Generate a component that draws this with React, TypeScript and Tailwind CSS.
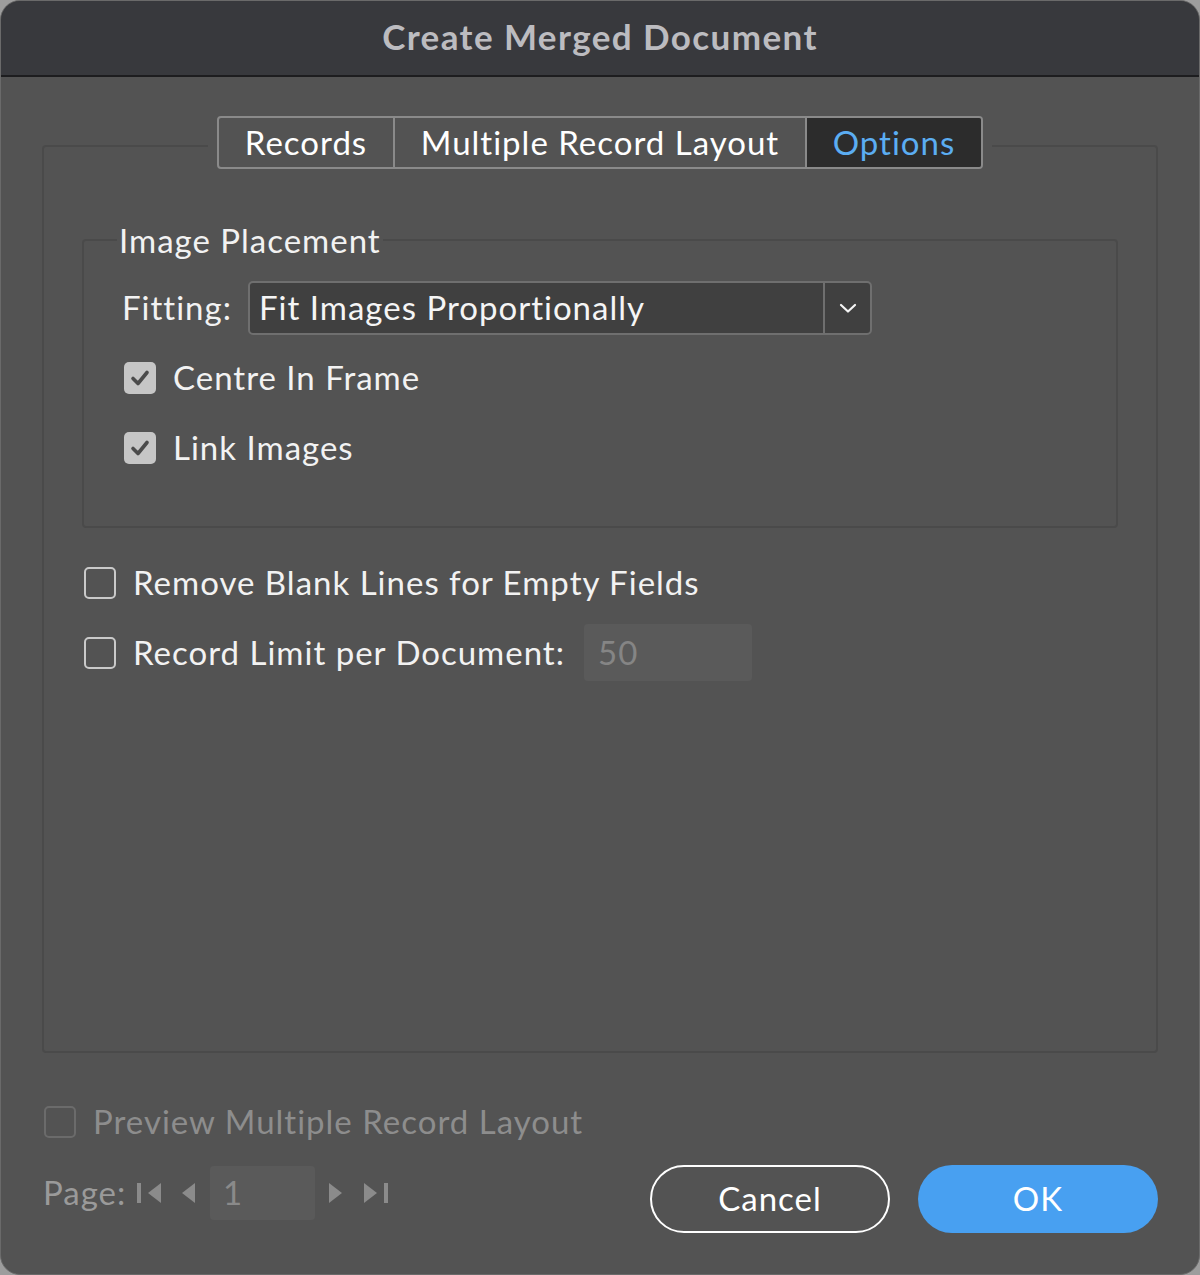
import React from "react";

const font = { fontFamily: "Lato, 'Open Sans', sans-serif" };

// body text: Lato is a touch narrower than the original UI face, so widen it a little
const txt = "text-[33px] tracking-[1px]";

function CheckBox({ checked, disabled }: { checked?: boolean; disabled?: boolean }) {
  if (checked) {
    return (
      <div className="w-[32px] h-[32px] rounded-[5px] bg-[#c6c6c6] flex items-center justify-center shrink-0">
        <svg width="24" height="24" viewBox="0 0 24 24">
          <polyline points="5,12.5 10,17.5 19,6.5" fill="none" stroke="#4b4b4b" strokeWidth="3.6" strokeLinecap="round" strokeLinejoin="round" />
        </svg>
      </div>
    );
  }
  return (
    <div
      className={[
        "w-[32px] h-[32px] rounded-[5px] border-2 shrink-0",
        disabled ? "border-[#6b6b6b]" : "border-[#cacaca]",
      ].join(" ")}
    />
  );
}

function TriangleIcon({ dir, bar }: { dir: "left" | "right"; bar?: boolean }) {
  const w = bar ? 24 : 13;
  return (
    <svg width={w} height="22" viewBox={`0 0 ${w} 22`} className="shrink-0">
      {dir === "left" ? (
        <>
          {bar && <rect x="0" y="1" width="4" height="20" fill="#8b8b8b" />}
          <polygon points={`${w},1 ${w - 13},11 ${w},21`} fill="#8b8b8b" />
        </>
      ) : (
        <>
          <polygon points="0,1 13,11 0,21" fill="#8b8b8b" />
          {bar && <rect x={w - 4} y="1" width="4" height="20" fill="#8b8b8b" />}
        </>
      )}
    </svg>
  );
}

export default function App() {
  return (
    <div className="w-[1200px] h-[1275px] bg-[#9d9d9d]" style={font}>
      <div className="w-[1200px] h-[1275px] rounded-[20px] overflow-hidden border border-[#6a6a6a] bg-[#535353] flex flex-col">
        {/* title bar */}
        <div className="h-[76px] shrink-0 bg-[#38393d] border-b-2 border-[#1d1d1f] flex items-center justify-center pb-[3px]">
          <div className="text-[35px] font-bold text-[#bcbcc0] tracking-[1.4px]">Create Merged Document</div>
        </div>

        <div className="px-[41px] flex flex-col">
          {/* tabs */}
          <div className="relative z-10 mt-[39px] flex justify-center">
            <div className="bg-[#535353] px-[9px]">
              <div className={["flex h-[53px] rounded-[4px] border-2 border-[#8a8a8a] overflow-hidden text-white", txt].join(" ")}>
                <div className="w-[174px] flex items-center justify-center">Records</div>
                <div className="w-[412px] flex items-center justify-center border-l-2 border-[#8a8a8a]">Multiple Record Layout</div>
                <div className="w-[176px] flex items-center justify-center border-l-2 border-[#8a8a8a] bg-[#2c2c2c] text-[#5badf2]">Options</div>
              </div>
            </div>
          </div>

          {/* group box */}
          <div className="-mt-[24px] h-[908px] rounded-[4px] border-2 border-[#4a4a4a] px-[38px] pt-[73px]">
            <fieldset className="border-2 border-[#4a4a4a] rounded-[4px] pl-[38px] pb-[58px] m-0">
              <legend className={["-ml-[5px] px-[2px] leading-[40px] text-[#f2f2f2]", txt].join(" ")}>Image Placement</legend>
              <div className="mt-[21px] flex items-center">
                <div className={["w-[126px] text-[#f2f2f2]", txt].join(" ")}>Fitting:</div>
                <div className="w-[624px] h-[54px] rounded-[5px] border-2 border-[#6f6f6f] bg-[#404040] flex">
                  <div className={["flex-1 flex items-center pl-[9px] text-[#f5f5f5]", txt].join(" ")}>Fit Images Proportionally</div>
                  <div className="w-[47px] border-l-2 border-[#6f6f6f] flex items-center justify-center">
                    <svg width="18" height="12" viewBox="0 0 18 12">
                      <polyline points="2,3 9,9.5 16,3" fill="none" stroke="#f5f5f5" strokeWidth="2.2" strokeLinecap="round" strokeLinejoin="round" />
                    </svg>
                  </div>
                </div>
              </div>
              <div className="mt-[23px] h-[40px] flex items-center gap-[17px] pl-[2px]">
                <CheckBox checked />
                <span className={["text-[#f2f2f2]", txt].join(" ")}>Centre In Frame</span>
              </div>
              <div className="mt-[30px] h-[40px] flex items-center gap-[17px] pl-[2px]">
                <CheckBox checked />
                <span className={["text-[#f2f2f2]", txt].join(" ")}>Link Images</span>
              </div>
            </fieldset>

            <div className="mt-[35px] h-[40px] flex items-center gap-[17px] pl-[2px]">
              <CheckBox />
              <span className={["text-[#f2f2f2]", txt].join(" ")}>Remove Blank Lines for Empty Fields</span>
            </div>
            <div className="mt-[21px] h-[57px] flex items-center pl-[2px]">
              <CheckBox />
              <span className={["ml-[17px] w-[451px] text-[#f2f2f2]", txt].join(" ")}>Record Limit per Document:</span>
              <div className={["w-[168px] h-[57px] rounded-[4px] bg-[#5a5a5a] flex items-center pl-[14px] text-[#858585]", txt].join(" ")}>50</div>
            </div>
          </div>

          {/* preview */}
          <div className="mt-[49px] h-[40px] flex items-center gap-[17px] pl-[2px]">
            <CheckBox disabled />
            <span className={["text-[#8d8d8d]", txt].join(" ")}>Preview Multiple Record Layout</span>
          </div>

          {/* bottom row */}
          <div className="mt-[23px] flex items-start">
            <div className={["h-[56px] flex items-center text-[#9a9a9a]", txt].join(" ")}>
              <span className="w-[95px] pl-[1px]">Page:</span>
              <TriangleIcon dir="left" bar />
              <span className="w-[21px]" />
              <TriangleIcon dir="left" />
              <div className="ml-[15px] w-[105px] h-[54px] rounded-[4px] bg-[#5a5a5a] flex items-center pl-[13px] text-[#8a8a8a]">1</div>
              <span className="w-[14px]" />
              <TriangleIcon dir="right" />
              <span className="w-[22px]" />
              <TriangleIcon dir="right" bar />
            </div>
            <div className="ml-auto flex gap-[28px]">
              <button className={["w-[240px] h-[68px] rounded-full border-2 border-white text-white", txt].join(" ")}>Cancel</button>
              <button className={["w-[240px] h-[68px] rounded-full bg-[#48a0f1] text-white", txt].join(" ")}>OK</button>
            </div>
          </div>
        </div>
      </div>
    </div>
  );
}
